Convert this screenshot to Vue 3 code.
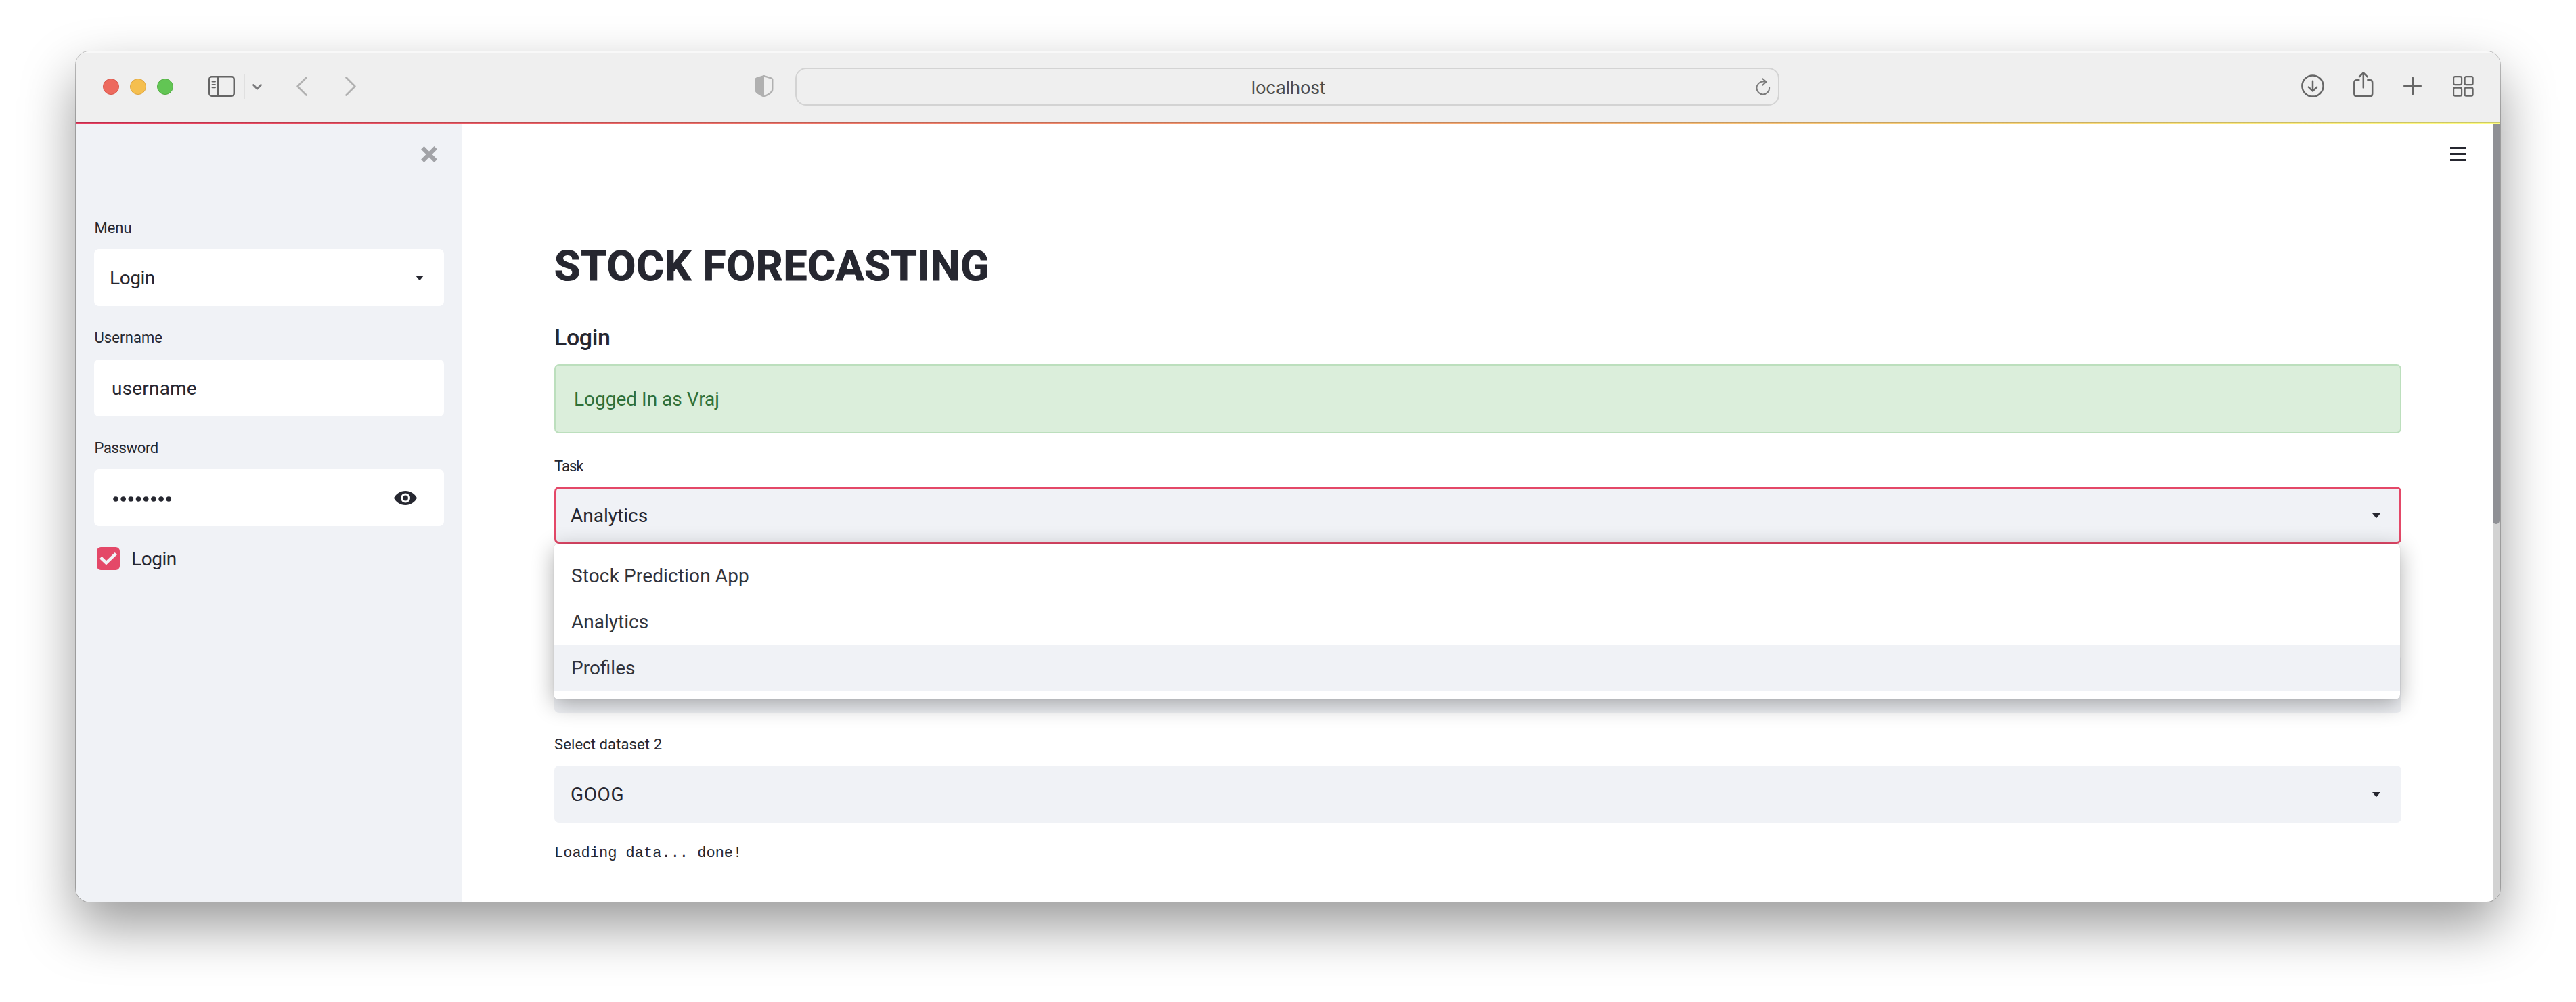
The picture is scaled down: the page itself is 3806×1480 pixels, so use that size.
<script setup>
import { ref } from 'vue'

const menu = ref('Login')
const username = ref('username')
const tasks = [
  { name: 'Stock Prediction App', cls: 'wide' },
  { name: 'Analytics', cls: '' },
  { name: 'Profiles', cls: '' },
]
const hovered = ref('Profiles')
const dots = Array.from({ length: 8 }, (_, i) => 4 + i * 11.18)
</script>

<template>
  <div class="desktop">
    <div class="window">
      <header class="toolbar">
        <div class="lights">
          <i class="light red"></i>
          <i class="light yellow"></i>
          <i class="light green"></i>
        </div>
        <svg class="ic-sidebar" width="39" height="31" viewBox="0 0 39 31" fill="none" stroke="#656565">
          <rect x="1.25" y="1.25" width="36.5" height="28.5" rx="3.5" stroke-width="2.5" />
          <path d="M14 1v29" stroke-width="2" />
          <path d="M5.5 8.5h4.5M5.5 13h4.5M5.5 17.3h4.5" stroke-width="1.8" stroke-linecap="round" />
        </svg>
        <i class="divider"></i>
        <svg class="ic-down" width="14" height="9" viewBox="0 0 14 9" fill="none" stroke="#7a7a7c" stroke-width="2.8" stroke-linecap="round" stroke-linejoin="round">
          <path d="M1.5 1.5L7 7.2L12.5 1.5" />
        </svg>
        <svg class="ic-back" width="16" height="29" viewBox="0 0 16 29" fill="none" stroke="#b1b1b1" stroke-width="2.6" stroke-linecap="round" stroke-linejoin="round">
          <path d="M14.5 1.5L1.6 14.5L14.5 27.5" />
        </svg>
        <svg class="ic-forward" width="16" height="29" viewBox="0 0 16 29" fill="none" stroke="#b1b1b1" stroke-width="2.6" stroke-linecap="round" stroke-linejoin="round">
          <path d="M1.5 1.5L14.4 14.5L1.5 27.5" />
        </svg>
        <svg class="ic-shield" width="28" height="33" viewBox="0 0 28 33" fill="none">
          <path d="M13.8 1.2L24.8 4.6Q26.3 5.1 26.3 6.6V20.5Q26.3 24 23.4 26.2Q19 29.3 13.8 31.8Q8.6 29.3 4.2 26.2Q1.2 24 1.2 20.5V6.6Q1.2 5.1 2.7 4.6Z" stroke="#b0b0b0" stroke-width="2.3" stroke-linejoin="round" />
          <path d="M14 1V32Q8.6 29.3 4.2 26.2Q1.2 24 1.2 20.5V6.6Q1.2 5.1 2.7 4.6Z" fill="#b0b0b0" />
        </svg>
        <div class="url">
          <span class="host">localhost</span>
          <svg class="ic-reload" width="22" height="26" viewBox="0 0 22 26" fill="none" stroke="#7b7b7b" stroke-width="2" stroke-linecap="round" stroke-linejoin="round">
            <path d="M20.2 14.8A9.4 9.4 0 1 1 10.8 5.6H15.2" />
            <path d="M10.2 1.2L15.6 5.7L10.2 10.7" />
          </svg>
        </div>
        <svg class="ic-download" width="34" height="34" viewBox="0 0 34 34" fill="none" stroke="#666" stroke-width="2.5" stroke-linecap="round" stroke-linejoin="round">
          <circle cx="17" cy="17" r="15.6" />
          <path d="M17 9.8V24.2M10.8 18.6L17 24.5L23.2 18.6" />
        </svg>
        <svg class="ic-share" width="30" height="38" viewBox="0 0 30 38" fill="none" stroke="#666" stroke-width="2.5" stroke-linecap="round" stroke-linejoin="round">
          <path d="M9.4 12.3H4.9Q1.3 12.3 1.3 15.9V32.6Q1.3 36.2 4.9 36.2H24.6Q28.2 36.2 28.2 32.6V15.9Q28.2 12.3 24.6 12.3H20.3" stroke-linecap="butt" />
          <path d="M14.8 23.5V1.6M8.8 7.3L14.8 1.3L20.8 7.3" />
        </svg>
        <svg class="ic-plus" width="27" height="28" viewBox="0 0 27 28" fill="none" stroke="#666" stroke-width="3" stroke-linecap="round">
          <path d="M1.5 14H25.5M13.5 1.8V26.2" />
        </svg>
        <svg class="ic-grid" width="31" height="31" viewBox="0 0 31 31" fill="none" stroke="#666" stroke-width="2.2">
          <rect x="1.1" y="1.1" width="12" height="12" rx="2.2" />
          <rect x="17.6" y="1.1" width="12" height="12" rx="2.2" />
          <rect x="1.1" y="17.6" width="12" height="12" rx="2.2" />
          <rect x="17.6" y="17.6" width="12" height="12" rx="2.2" />
        </svg>
      </header>
      <div class="decoration"></div>

      <div class="page">
        <aside class="sidebar">
          <div class="close-row">
            <svg width="24" height="24" viewBox="0 0 24 24" fill="none" stroke="#a2a3a7" stroke-width="6.2">
              <path d="M2.3 2.3L21.7 21.7M21.7 2.3L2.3 21.7" />
            </svg>
          </div>
          <label class="label first">Menu</label>
          <div class="field select">
            <span class="login">{{ menu }}</span>
            <svg class="caret" width="12" height="7" viewBox="0 0 12 7"><path d="M0 0H12L6.8 6.5Q6 7.2 5.2 6.5Z" fill="#262730" /></svg>
          </div>
          <label class="label user">Username</label>
          <div class="field input"><span class="uname">{{ username }}</span></div>
          <label class="label pass">Password</label>
          <div class="field input">
            <svg width="88" height="8" viewBox="0 0 88 8" class="dots"><circle v-for="x in dots" :key="x" :cx="x" cy="4" r="3.8" fill="#262730" /></svg>
            <svg class="eye" width="34" height="21" viewBox="0 0 34 21" fill="#262730">
              <path fill-rule="evenodd" d="M17 0C9.5 0 3 4.2 0 10.5C3 16.8 9.5 21 17 21S31 16.8 34 10.5C31 4.2 24.5 0 17 0ZM17 17.5A7 7 0 1 1 17 3.5A7 7 0 0 1 17 17.5ZM17 6.6A3.9 3.9 0 1 0 17 14.4A3.9 3.9 0 1 0 17 6.6Z" />
            </svg>
          </div>
          <div class="check-row">
            <span class="checkbox">
              <svg width="26" height="19" viewBox="0 0 26 19" fill="none" stroke="#f0f2f6" stroke-width="4.6"><path d="M1.7 7.5L9.9 15.3L24.3 1.7" /></svg>
            </span>
            <span class="login">Login</span>
          </div>
        </aside>

        <main class="main">
          <svg class="hamburger" width="24" height="21" viewBox="0 0 24 21" fill="#262730"><path d="M0 0H24V3H0ZM0 9H24V12H0ZM0 18H24V21H0Z" /></svg>
          <h1>STOCK FORECASTING</h1>
          <h3>Login</h3>
          <div class="success">Logged In as Vraj</div>
          <label class="label task">Task</label>
          <div class="task-select">
            <div class="box focused">
              <span>Analytics</span>
              <svg class="caret" width="12" height="7" viewBox="0 0 12 7"><path d="M0 0H12L6.8 6.5Q6 7.2 5.2 6.5Z" fill="#262730" /></svg>
            </div>
            <ul class="options">
              <li v-for="t in tasks" :key="t.name" :class="[t.cls, { active: t.name === hovered }]">{{ t.name }}</li>
            </ul>
          </div>
          <div class="box covered"></div>
          <label class="label dataset">Select dataset 2</label>
          <div class="box">
            <span class="goog">GOOG</span>
            <svg class="caret" width="12" height="7" viewBox="0 0 12 7"><path d="M0 0H12L6.8 6.5Q6 7.2 5.2 6.5Z" fill="#262730" /></svg>
          </div>
          <div class="status">Loading data... done!</div>
        </main>

        <div class="scroll"><div class="thumb"></div></div>
      </div>
    </div>
  </div>
</template>

<style>
body { background: #fff; }
</style>

<style scoped>
* { box-sizing: border-box; }
.desktop {
  width: 3806px;
  height: 1480px;
  padding: 76px 112px 148px;
  overflow: hidden;
  background: #fff;
  font-family: Roboto, "Open Sans", sans-serif;
  font-size: 28px;
  color: #262730;
}
.window {
  width: 3582px;
  height: 1256px;
  border-radius: 20px;
  background: #fff;
  box-shadow: 0 0 0 1px rgba(0, 0, 0, .24), 0 36px 80px rgba(0, 0, 0, .4);
  display: flex;
  flex-direction: column;
  overflow: hidden;
}
.toolbar {
  flex: none;
  height: 104px;
  padding-left: 40px;
  background: #efefef;
  box-shadow: inset 0 2px 0 #f8f8f8;
  display: flex;
  align-items: center;
}
.toolbar > * { flex: none; }
.toolbar > svg { margin-bottom: 2px; }
.lights { display: flex; gap: 16px; }
.light { width: 24px; height: 24px; border-radius: 50%; border: 1px solid; }
.red { background: #ed6a5e; border-color: #d8564b; }
.yellow { background: #f5bf4f; border-color: #dda440; }
.green { background: #62c554; border-color: #52ab41; }
.toolbar .ic-sidebar { margin-left: 52px; }
.divider { width: 2px; height: 36px; margin-left: 13px; background: #e0e0e0; }
.toolbar .ic-down { margin-left: 11px; margin-bottom: 0; }
.toolbar .ic-back { margin-left: 51px; }
.toolbar .ic-forward { margin-left: 56px; }
.toolbar .ic-shield { margin-left: 589px; margin-bottom: 1px; }
.url {
  width: 1454px;
  height: 56px;
  margin-left: 32px;
  padding: 0 11px 0 36px;
  border: 2px solid #d3d3d3;
  border-radius: 16px;
  display: flex;
  align-items: center;
}
.host {
  flex: 1;
  padding-top: 3px;
  text-align: center;
  font-family: Inter, sans-serif;
  font-size: 26px;
  letter-spacing: -.2px;
  color: #4c4c4c;
}
.ic-download { margin-left: 771px; }
.toolbar .ic-share { margin-left: 43px; margin-bottom: 6px; }
.ic-plus { margin-left: 44px; }
.ic-grid { margin-left: 46px; }
.decoration {
  flex: none;
  height: 3px;
  background:
    linear-gradient(rgba(0, 0, 0, .2) 0 1px, rgba(0, 0, 0, .05) 1px 2px, transparent 2px),
    linear-gradient(90deg, #ea3c60, #fffd80);
}
.page { flex: 1; min-height: 0; display: flex; }
.sidebar { width: 571px; padding: 33px 27px 0; background: #f0f2f6; }
.close-row { height: 24px; padding-right: 10px; display: flex; justify-content: flex-end; }
.label { display: block; height: 34px; line-height: 36px; font-size: 22px; }
.sidebar .label { margin-bottom: 15px; padding-left: .5px; }
.sidebar .first { margin-top: 79px; margin-bottom: 15px; }
.sidebar .user { margin-top: 29px; letter-spacing: .1px; margin-bottom: 16px; }
.sidebar .pass { margin-top: 28px; letter-spacing: -.35px; margin-bottom: 16px; line-height: 37px; }
.field {
  height: 84px;
  border-radius: 7px;
  background: #fff;
  display: flex;
  align-items: center;
  justify-content: space-between;
}
.select { padding: 0 30px 0 23px; }
.input { padding: 0 40px 0 26px; }
.login { letter-spacing: -.45px; }
.uname { letter-spacing: .2px; }
.dots { margin: 4px 0 0 2px; }
.check-row { margin: 31px 0 0 4px; height: 34px; display: flex; align-items: center; gap: 17px; }
.checkbox {
  width: 34px;
  height: 34px;
  border-radius: 6px;
  background: #e44868;
  display: flex;
  align-items: center;
  justify-content: center;
}
.main { width: 3000px; padding: 34px 135px 0 136px; display: flex; flex-direction: column; }
.hamburger { flex: none; align-self: flex-end; margin-right: -96px; }
h1 {
  margin: 114px 0 0;
  height: 80px;
  line-height: 81px;
  font-size: 62px;
  font-weight: 700;
  letter-spacing: .9px;
  -webkit-text-stroke: 1.2px #262730;
}
h3 {
  margin: 41px 0 15px;
  height: 50px;
  line-height: 50px;
  font-size: 34px;
  font-weight: 500;
  letter-spacing: -.4px;
}
.success {
  height: 102px;
  line-height: 100px;
  padding-left: 27px;
  border: 2px solid #bcdfbd;
  border-radius: 7px;
  background: #dbeedb;
  color: #2f7039;
}
.task { margin: 31px 0 14px; letter-spacing: -1px; }
.task-select { position: relative; }
.box {
  height: 84px;
  border-radius: 7px;
  padding: 0 31px 0 24px;
  background: #f0f2f6;
  display: flex;
  align-items: center;
  justify-content: space-between;
}
.focused { padding: 0 28px 0 21px; border: 3px solid #e44868; }
.options {
  position: absolute;
  left: -1px;
  right: 2px;
  top: 84px;
  margin: 0;
  padding: 13px 0;
  list-style: none;
  border-radius: 7px;
  background: #fff;
  box-shadow: 0 0 1px rgba(0, 0, 0, .2), 0 8px 32px rgba(0, 0, 0, .32);
}
.options li { height: 68px; line-height: 70px; padding-left: 26px; color: #31333c; }
.options .wide { letter-spacing: .13px; }
.options .active { background: #f0f2f6; }
.covered { margin-top: 166px; }
.dataset { margin: 29px 0 15px; letter-spacing: .1px; }
.goog { letter-spacing: .6px; }
.status {
  margin-top: 31px;
  line-height: 30px;
  font-family: "Liberation Mono", monospace;
  font-size: 22px;
}
.scroll { width: 10px; background: #d2d2d2; }
.thumb { height: 591px; border-radius: 0 0 5px 5px; background: #8f9095; }
</style>
